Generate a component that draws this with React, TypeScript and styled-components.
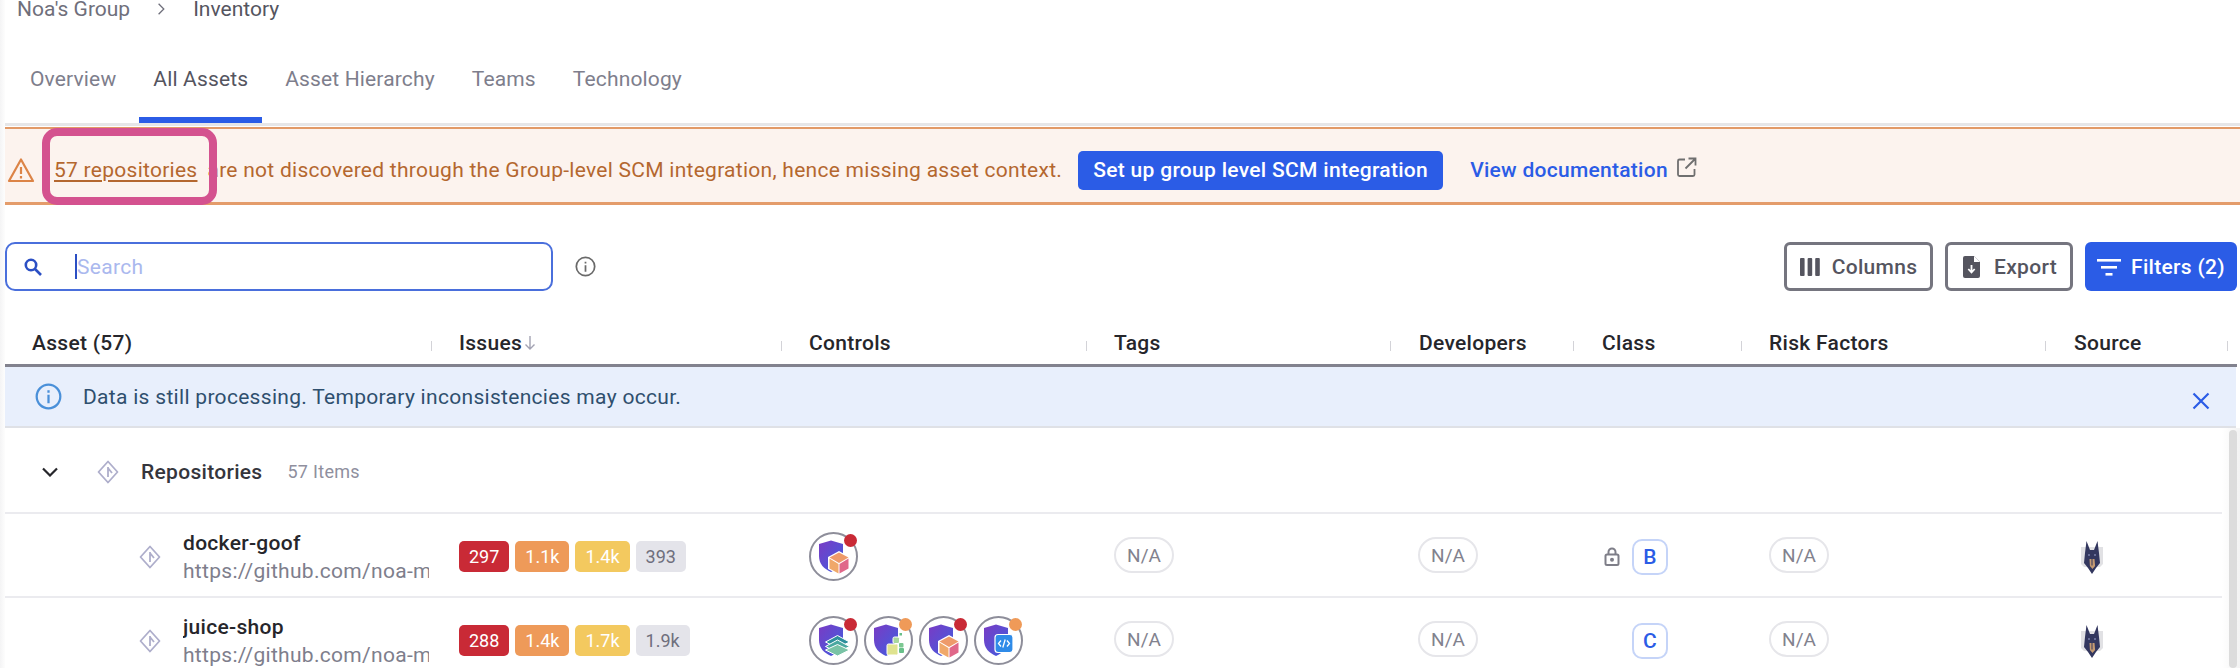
import React from "react";
import styled, { createGlobalStyle } from "styled-components";

const Global = createGlobalStyle`
  html, body { margin: 0; padding: 0; background: #fff; overflow: hidden; }
  body { font-family: Roboto, "Liberation Sans", sans-serif; }
  * { box-sizing: border-box; }
`;

const Page = styled.div`
  position: relative;
  width: 2240px;
  height: 668px;
  overflow: hidden;
  background: #fff;
  font-size: 21px;
  letter-spacing: 0.3px;
`;
const LeftShade = styled.div`
  position: absolute;
  left: 0; top: 0; bottom: 0;
  width: 5px;
  background: linear-gradient(90deg, #f4f4f5, #fdfdfd);
`;
const Breadcrumb = styled.nav`
  height: 18px;
  display: flex;
  align-items: center;
  padding-left: 17px;
  color: #6f6f7b;
  letter-spacing: 0;
`;
const CrumbSep = styled.span`
  margin: 0 24px 0 23px;
  display: inline-flex;
  color: #6f6f7b;
`;
const CrumbCurrent = styled.span`color: #55555f;`;

const TabBar = styled.div`
  height: 108px;
  display: flex;
  align-items: flex-end;
  gap: 9px;
  padding-left: 16px;
  border-bottom: 3px solid #e6e6e8;
  margin-bottom: 1px;
  letter-spacing: 0.15px;
`;
const Tab = styled.div<{ $active?: boolean }>`
  height: 82px;
  padding: 0 14px;
  display: flex;
  align-items: center;
  border-bottom: 6px solid ${(p) => (p.$active ? "#2b5ce6" : "transparent")};
  color: ${(p) => (p.$active ? "#55555f" : "#7e7e8c")};
`;

const Banner = styled.div`
  height: 78px;
  display: flex;
  align-items: center;
  padding: 9px 0 0 7px;
  background: #fcf3ee;
  border-top: 2px solid #e29a68;
  border-bottom: 3px solid #e49c6b;
  color: #b4672f;
  letter-spacing: 0.27px;
`;
const LinkWrap = styled.span`
  position: relative;
  margin: 0 10px 0 19px;
`;
const OrangeLink = styled.span`
  text-decoration: underline;
  text-underline-offset: 3px;
`;
const Highlight = styled.span`
  position: absolute;
  left: -12px;
  right: -20px;
  top: -30px;
  bottom: -23px;
  border: 8px solid #d4528f;
  border-radius: 15px;
`;
const PrimaryBtn = styled.button`
  height: 39px;
  width: 365px;
  margin-left: 16px;
  border: 0;
  border-radius: 5px;
  background: #2b5ce6;
  color: #fff;
  font: 500 21px Roboto, sans-serif;
  letter-spacing: 0.3px;
`;
const DocLink = styled.span`
  margin-left: 27px;
  display: inline-flex;
  align-items: center;
  gap: 8px;
  color: #2b5ce6;
  font-weight: 500;
`;
const DocIcon = styled.span`
  display: inline-flex;
  margin-top: -6px;
`;

const Toolbar = styled.div`
  height: 49px;
  margin: 37px 3px 0 5px;
  display: flex;
  align-items: center;
`;
const SearchBox = styled.div`
  width: 548px;
  height: 49px;
  display: flex;
  align-items: center;
  padding-left: 16px;
  border: 2px solid #4a6fdc;
  border-radius: 10px;
  color: #2b4fc4;
`;
const Caret = styled.span`
  width: 2px;
  height: 25px;
  margin-left: 32px;
  background: #2b4fc4;
`;
const Placeholder = styled.span`
  color: #aab8ee;
`;
const InfoTip = styled.span`
  display: inline-flex;
  margin-left: 22px;
  color: #6a6a6a;
`;
const Spacer = styled.div`flex: 1;`;
const OutlineBtn = styled.div<{ $w: number; $gap: number; $shift?: number }>`
  width: ${(p) => p.$w}px;
  height: 49px;
  margin-right: 12px;
  padding-left: ${(p) => p.$shift ?? 0}px;
  display: flex;
  align-items: center;
  justify-content: center;
  gap: ${(p) => p.$gap}px;
  border: 3px solid #75757f;
  border-radius: 6px;
  color: #55555f;
  font-weight: 500;
`;
const FilterBtn = styled.div`
  width: 152px;
  height: 49px;
  display: flex;
  align-items: center;
  justify-content: center;
  gap: 10px;
  border-radius: 6px;
  background: #2b5ce6;
  color: #fff;
  font-weight: 500;
  white-space: nowrap;
`;

const grid = "427px 350px 305px 304px 183px 168px 304px 182px";

const HeaderRow = styled.div`
  height: 76px;
  margin: 0 3px 0 5px;
  display: grid;
  grid-template-columns: ${grid};
  padding-top: 30px;
  border-bottom: 3px solid #82828e;
`;
const HeadCell = styled.div<{ $pad?: number }>`
  display: flex;
  align-items: center;
  padding-left: ${(p) => p.$pad ?? 28}px;
  font-weight: 500;
  color: #26262b;
  position: relative;
  &::after {
    content: "";
    position: absolute;
    right: 0;
    top: 20px;
    height: 10px;
    width: 1px;
    background: #d3d3d8;
  }
`;
const SortArrow = styled.span`
  display: inline-flex;
  margin-left: 2px;
  color: #a3a3b3;
`;

const InfoBar = styled.div`
  height: 61px;
  margin: 0 4px 0 5px;
  display: flex;
  align-items: center;
  padding-left: 30px;
  background: #e8effc;
  border-bottom: 2px solid #dfe1e6;
  color: #2f4f6e;
`;
const InfoIconWrap = styled.span`
  display: inline-flex;
  margin-right: 21px;
  color: #4a90d9;
`;
const CloseWrap = styled.span`
  margin-left: auto;
  margin-right: 26px;
  margin-top: 9px;
  display: inline-flex;
  color: #2b5ce6;
`;

const GroupRow = styled.div`
  height: 86px;
  margin-left: 5px;
  display: flex;
  align-items: center;
  padding: 3px 0 0 37px;
  border-bottom: 2px solid #ebebef;
`;
const GroupChevron = styled.span`
  display: inline-flex;
  color: #26262b;
  width: 55px;
`;
const GroupName = styled.span`
  margin-left: 22px;
  font-weight: 500;
  color: #35353c;
`;
const GroupCount = styled.span`
  margin-left: 25px;
  font-size: 18px;
  color: #8f8f9e;
`;

const Row = styled.div`
  height: 84px;
  margin-left: 5px;
  display: grid;
  grid-template-columns: ${grid};
  align-items: center;
  border-bottom: 2px solid #ebebef;
`;
const AssetCell = styled.div`
  display: flex;
  align-items: center;
  padding: 3px 0 0 134px;
  height: 100%;
  overflow: hidden;
`;
const AssetText = styled.div`
  margin-left: 22px;
  width: 246px;
  overflow: hidden;
  white-space: nowrap;
`;
const AssetName = styled.div`
  font-weight: 500;
  line-height: 28px;
  color: #26262b;
`;
const AssetUrl = styled.div`
  line-height: 28px;
  color: #7e7e8c;
`;
const Badges = styled.div`
  display: flex;
  gap: 6px;
  padding-left: 27px;
  margin-top: 3px;
  letter-spacing: 0;
`;
const Badge = styled.span<{ $bg: string; $fg: string }>`
  height: 31px;
  min-width: 50px;
  padding: 0 10px;
  display: inline-flex;
  align-items: center;
  justify-content: center;
  border-radius: 5px;
  font-size: 18px;
  background: ${(p) => p.$bg};
  color: ${(p) => p.$fg};
`;
const Controls = styled.div`
  display: flex;
  gap: 6px;
  padding-left: 27px;
  margin-top: 3px;
`;
const ControlRing = styled.div`
  position: relative;
  width: 49px;
  height: 49px;
  display: flex;
  align-items: center;
  justify-content: center;
  border: 2px solid #8e8e9a;
  border-radius: 50%;
`;
const Dot = styled.span<{ $c: string }>`
  position: absolute;
  right: -1px;
  top: 0;
  width: 13px;
  height: 13px;
  border-radius: 50%;
  background: ${(p) => p.$c};
`;
const PillCell = styled.div`padding-left: 27px;`;
const Pill = styled.span`
  width: 60px;
  height: 36px;
  display: inline-flex;
  align-items: center;
  justify-content: center;
  border: 2px solid #e6e6ea;
  border-radius: 18px;
  font-size: 19px;
  letter-spacing: 0;
  color: #82828e;
`;
const ClassCell = styled.div`
  display: flex;
  align-items: center;
  padding-left: 30px;
  gap: 12px;
`;
const LockSlot = styled.span`
  width: 16px;
  display: inline-flex;
  color: #7e7e88;
  margin-top: 3px;
`;
const ClassPill = styled.span`
  width: 36px;
  height: 36px;
  margin-top: 3px;
  display: inline-flex;
  align-items: center;
  justify-content: center;
  border: 2px solid #c5d4f8;
  border-radius: 10px;
  color: #2b5ce6;
  font-weight: 500;
`;
const SourceCell = styled.div`padding-left: 33px; display: flex; margin-top: 3px;`;
const Scrollbar = styled.div`
  position: absolute;
  right: 3px;
  top: 430px;
  bottom: 0;
  width: 8px;
  border-radius: 4px;
  background: #dcdcdc;
`;
const ScrollShade = styled.div`
  position: absolute;
  right: 0;
  top: 428px;
  bottom: 0;
  width: 18px;
  background: linear-gradient(90deg, #ffffff, #f3f3f3);
`;

const Chevron = ({ s = 20 }: { s?: number }) => (
  <svg width={s} height={s} viewBox="0 0 20 20" fill="none" stroke="currentColor" strokeWidth="1.6">
    <path d="M7 3.5 13.5 10 7 16.5" />
  </svg>
);
const Warn = () => (
  <svg width="28" height="26" viewBox="0 0 28 26" fill="none" stroke="#dc8447" strokeWidth="2.2">
    <path d="M14 2.5 26 24H2Z" strokeLinejoin="round" />
    <path d="M14 10v7M14 19v2.4" />
  </svg>
);
const External = () => (
  <svg width="21" height="21" viewBox="0 0 21 21" fill="none" stroke="#6f6f6f" strokeWidth="1.8">
    <path d="M9 2.5H3.5a1.5 1.5 0 0 0-1.5 1.5v13.5a1.5 1.5 0 0 0 1.5 1.5H17a1.5 1.5 0 0 0 1.5-1.5V12" />
    <path d="M12.5 1.5h7v7M19.5 1.5 9.5 11.5" />
  </svg>
);
const SearchIcon = () => (
  <svg width="20" height="20" viewBox="0 0 20 20" fill="none" stroke="currentColor" strokeWidth="2.6">
    <circle cx="8" cy="8" r="5.2" />
    <path d="m12 12 6 6" />
  </svg>
);
const CircleInfo = ({ s }: { s: number }) => (
  <svg width={s} height={s} viewBox="0 0 24 24" fill="none" stroke="currentColor" strokeWidth="2">
    <circle cx="12" cy="12" r="10.5" />
    <path d="M12 10.5v7.5M12 6.5v2.2" />
  </svg>
);
const ColumnsIcon = () => (
  <svg width="20" height="20" viewBox="0 0 20 20" fill="#55555f">
    <rect x="0" y="1" width="4.6" height="18" rx="1" />
    <rect x="7.6" y="1" width="4.6" height="18" rx="1" />
    <rect x="15.2" y="1" width="4.6" height="18" rx="1" />
  </svg>
);
const FileDownIcon = () => (
  <svg width="17" height="22" viewBox="0 0 17 22">
    <path d="M2 0h9l6 6v14a2 2 0 0 1-2 2H2a2 2 0 0 1-2-2V2a2 2 0 0 1 2-2Z" fill="#55555f" />
    <path d="M11 0v6h6" fill="#fff" />
    <path d="M8.5 9v7M5.3 13l3.2 3.4 3.2-3.4" fill="none" stroke="#fff" strokeWidth="1.8" />
  </svg>
);
const FilterIcon = () => (
  <svg width="24" height="18" viewBox="0 0 24 18" fill="#fff">
    <rect x="0" y="1" width="24" height="2.6" />
    <rect x="4" y="8" width="16" height="2.6" />
    <rect x="8.5" y="15" width="7" height="2.6" />
  </svg>
);
const SortIcon = () => (
  <svg width="12" height="16" viewBox="0 0 12 16" fill="none" stroke="currentColor" strokeWidth="1.4">
    <path d="M6 1v13M1.5 9.5 6 14l4.5-4.5" />
  </svg>
);
const CloseIcon = () => (
  <svg width="18" height="18" viewBox="0 0 18 18" fill="none" stroke="currentColor" strokeWidth="2.2">
    <path d="m1.5 1.5 15 15M16.5 1.5l-15 15" />
  </svg>
);
const ChevronDown = () => (
  <svg width="16" height="10" viewBox="0 0 16 10" fill="none" stroke="currentColor" strokeWidth="2.2">
    <path d="M1 1.5 8 8.5l7-7" />
  </svg>
);
const RepoIcon = () => (
  <svg width="22" height="24" viewBox="0 0 22 24" fill="none" stroke="#aeaecb" strokeWidth="1.8" strokeLinejoin="round">
    <path d="M11 1.5 20.5 12 11 22.5 1.5 12Z" />
    <path d="M11 7v10M11 8l4 5" />
  </svg>
);
const LockIcon = () => (
  <svg width="16" height="19" viewBox="0 0 16 19" fill="none" stroke="currentColor" strokeWidth="2">
    <rect x="1.5" y="7.5" width="13" height="10.5" rx="1.5" />
    <path d="M4.5 7.5V5a3.5 3.5 0 0 1 7 0v2.5" />
    <circle cx="8" cy="12.7" r="1" fill="currentColor" />
  </svg>
);
const DogIcon = () => (
  <svg width="26" height="34" viewBox="0 0 24 34">
    <path d="M1 7h22v17l-3 3H4l-3-3Z" fill="#c9c9ce" opacity=".55" />
    <path d="M5 13 6.5 1l3.5 9h4l3.5-9L19 13l1 10-4 5-4 6-4-6-4-5Z" fill="#33375f" />
    <path d="M9.5 19h2v6.5h1V19h2l.6 7-2.6 3-2.6-3Z" fill="#c49a72" />
    <circle cx="9" cy="15" r="1" fill="#7b80a8" />
    <circle cx="15" cy="15" r="1" fill="#7b80a8" />
  </svg>
);

type Kind = "cube" | "stack" | "blocks" | "code";
const Shield = ({ id }: { id: string }) => (
  <>
    <defs>
      <linearGradient id={id} x1="0" y1="0" x2="1" y2="1">
        <stop offset="0" stopColor="#7a3bc4" />
        <stop offset="1" stopColor="#3f5fe0" />
      </linearGradient>
    </defs>
    <path d="M15 1.5 27 5v12c0 8-5 13-12 16-7-3-12-8-12-16V5Z" fill={`url(#${id})`} />
  </>
);
const ControlArt = ({ kind, id }: { kind: Kind; id: string }) => (
  <svg width="36" height="36" viewBox="0 0 36 36">
    <Shield id={id} />
    {kind === "cube" && (
      <>
        <path d="M23 12 34 18v12l-11 6-11-6V18Z" fill="#fff" />
        <path d="M23 13.5 32.5 18.5 23 24l-9.5-5.5Z" fill="#ee9a6a" />
        <path d="M13.5 19.5 22.5 25v9.5l-9-5Z" fill="#f0a86a" />
        <path d="M32.5 19.5 23.5 25v9.5l9-5Z" fill="#e0688a" />
      </>
    )}
    {kind === "stack" && (
      <>
        <path d="M21.5 12.5 33.5 19l-12 6-12-6Z" fill="#2e8f9c" stroke="#fff" strokeWidth="1" />
        <path d="M21.5 17 33.5 23.5l-12 6-12-6Z" fill="#4aa8a0" stroke="#fff" strokeWidth="1" />
        <path d="M21.5 21.5 33.5 27l-12 6-12-6Z" fill="#7ac3a6" stroke="#fff" strokeWidth="1" />
      </>
    )}
    {kind === "blocks" && (
      <>
        <rect x="16" y="21" width="11" height="11" rx="1.5" fill="#dfe38f" stroke="#fff" />
        <rect x="22" y="14" width="6.5" height="6.5" rx="1.5" fill="#a8d79c" stroke="#fff" />
        <rect x="28" y="20" width="4.5" height="4.5" rx="1" fill="#7cc892" />
        <rect x="28" y="25" width="5" height="5" rx="1" fill="#68c08a" />
        <rect x="28.5" y="10" width="2.5" height="2.5" fill="#68c08a" />
      </>
    )}
    {kind === "code" && (
      <>
        <rect x="14" y="11.5" width="18" height="18" rx="3" fill="#2f8be8" stroke="#fff" strokeWidth="1.2" />
        <path d="M20 17.5 17.5 20.5l2.5 3M26 17.5l2.5 3-2.5 3M24.2 16.5l-2.4 8" fill="none" stroke="#fff" strokeWidth="1.3" />
      </>
    )}
  </svg>
);
const Control = ({ kind, dot, id }: { kind: Kind; dot: string; id: string }) => (
  <ControlRing>
    <ControlArt kind={kind} id={id} />
    <Dot $c={dot} />
  </ControlRing>
);

const RED = "#c92a36";
const ORANGE = "#ef9a58";
const YELLOW = "#f3c95f";

const rows = [
  {
    name: "docker-goof",
    issues: ["297", "1.1k", "1.4k", "393"],
    controls: [{ kind: "cube" as Kind, dot: RED }],
    cls: "B",
    lock: true,
  },
  {
    name: "juice-shop",
    issues: ["288", "1.4k", "1.7k", "1.9k"],
    controls: [
      { kind: "stack" as Kind, dot: RED },
      { kind: "blocks" as Kind, dot: ORANGE },
      { kind: "cube" as Kind, dot: RED },
      { kind: "code" as Kind, dot: ORANGE },
    ],
    cls: "C",
    lock: false,
  },
];
const badgeStyles = [
  { bg: RED, fg: "#fff" },
  { bg: "#ee9a59", fg: "#fff" },
  { bg: YELLOW, fg: "#fff" },
  { bg: "#e4e4ea", fg: "#6f6f7d" },
];
const heads = ["Asset (57)", "Issues", "Controls", "Tags", "Developers", "Class", "Risk Factors", "Source"];

export default function App() {
  return (
    <Page>
      <Global />
      <LeftShade />
      <Breadcrumb>
        Noa's Group
        <CrumbSep><Chevron s={16} /></CrumbSep>
        <CrumbCurrent>Inventory</CrumbCurrent>
      </Breadcrumb>
      <TabBar>
        <Tab>Overview</Tab>
        <Tab $active>All Assets</Tab>
        <Tab>Asset Hierarchy</Tab>
        <Tab>Teams</Tab>
        <Tab>Technology</Tab>
      </TabBar>
      <Banner>
        <Warn />
        <LinkWrap>
          <OrangeLink>57 repositories</OrangeLink>
          <Highlight />
        </LinkWrap>
        are not discovered through the Group-level SCM integration, hence missing asset context.
        <PrimaryBtn>Set up group level SCM integration</PrimaryBtn>
        <DocLink>View documentation <DocIcon><External /></DocIcon></DocLink>
      </Banner>
      <Toolbar>
        <SearchBox>
          <SearchIcon />
          <Caret />
          <Placeholder>Search</Placeholder>
        </SearchBox>
        <InfoTip><CircleInfo s={21} /></InfoTip>
        <Spacer />
        <OutlineBtn $w={149} $gap={12}><ColumnsIcon />Columns</OutlineBtn>
        <OutlineBtn $w={128} $gap={14} $shift={2}><FileDownIcon />Export</OutlineBtn>
        <FilterBtn><FilterIcon />Filters (2)</FilterBtn>
      </Toolbar>
      <HeaderRow>
        {heads.map((h, i) => (
          <HeadCell key={h} $pad={[27, 27, 27, 27, 28, 28, 27, 28][i]}>
            {h}
            {h === "Issues" && <SortArrow><SortIcon /></SortArrow>}
          </HeadCell>
        ))}
      </HeaderRow>
      <InfoBar>
        <InfoIconWrap><CircleInfo s={27} /></InfoIconWrap>
        Data is still processing. Temporary inconsistencies may occur.
        <CloseWrap><CloseIcon /></CloseWrap>
      </InfoBar>
      <GroupRow>
        <GroupChevron><ChevronDown /></GroupChevron>
        <RepoIcon />
        <GroupName>Repositories</GroupName>
        <GroupCount>57 Items</GroupCount>
      </GroupRow>
      {rows.map((r, ri) => (
        <Row key={r.name}>
          <AssetCell>
            <RepoIcon />
            <AssetText>
              <AssetName>{r.name}</AssetName>
              <AssetUrl>https://github.com/noa-m</AssetUrl>
            </AssetText>
          </AssetCell>
          <Badges>
            {r.issues.map((v, i) => (
              <Badge key={i} $bg={badgeStyles[i].bg} $fg={badgeStyles[i].fg}>{v}</Badge>
            ))}
          </Badges>
          <Controls>
            {r.controls.map((c, i) => (
              <Control key={i} kind={c.kind} dot={c.dot} id={`sh-${ri}-${i}`} />
            ))}
          </Controls>
          <PillCell><Pill>N/A</Pill></PillCell>
          <PillCell><Pill>N/A</Pill></PillCell>
          <ClassCell>
            <LockSlot>{r.lock && <LockIcon />}</LockSlot>
            <ClassPill>{r.cls}</ClassPill>
          </ClassCell>
          <PillCell><Pill>N/A</Pill></PillCell>
          <SourceCell><DogIcon /></SourceCell>
        </Row>
      ))}
      <ScrollShade />
      <Scrollbar />
    </Page>
  );
}
